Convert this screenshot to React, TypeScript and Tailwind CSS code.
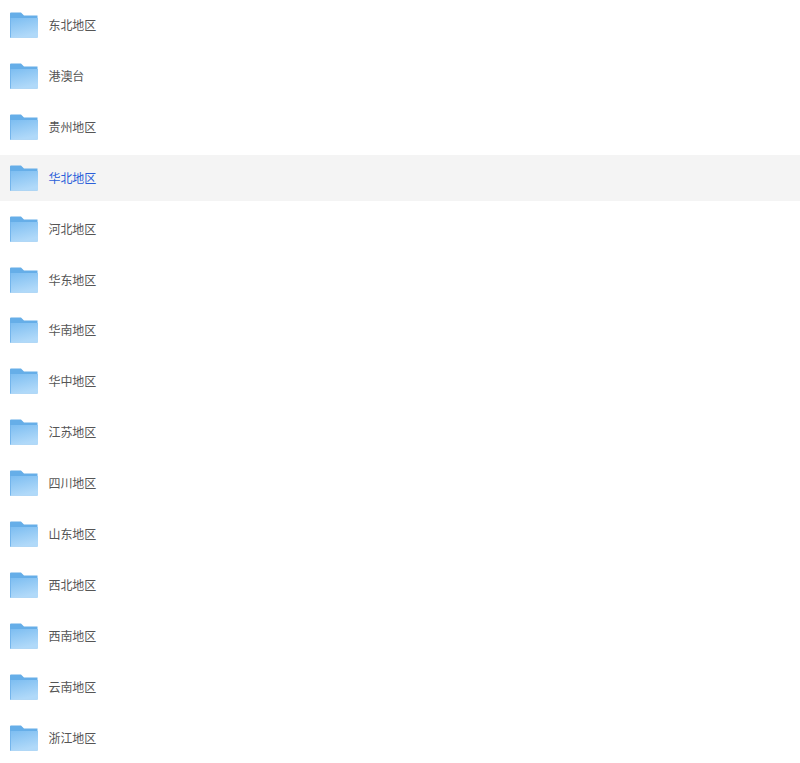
import React from "react";

const folders = [
  "东北地区",
  "港澳台",
  "贵州地区",
  "华北地区",
  "河北地区",
  "华东地区",
  "华南地区",
  "华中地区",
  "江苏地区",
  "四川地区",
  "山东地区",
  "西北地区",
  "西南地区",
  "云南地区",
  "浙江地区",
];

const FolderIcon = ({ id }: { id: number }) => (
  <svg width="30" height="26" viewBox="0 0 30 26" className="shrink-0">
    <defs>
      <linearGradient id={`front-${id}`} x1="0" y1="0" x2="0.35" y2="1">
        <stop offset="0" stopColor="#7cbdf1" />
        <stop offset="1" stopColor="#b0d9f9" />
      </linearGradient>
    </defs>
    <path d="M1 1.5 Q1 0.5 2 0.5 H12 L15 3.5 H28.5 V25.5 H1 Z" fill="#66aee8" />
    <path d="M1 6 H29 V25.5 H1 Z" fill={`url(#front-${id})`} />
    <rect x="1" y="6" width="1" height="19.5" fill="#74b5ec" />
  </svg>
);

export default function App() {
  return (
    <div className="flex flex-col gap-[5px] pt-[2px] bg-white font-['Liberation_Sans','Noto_Sans_CJK_SC',sans-serif]">
      {folders.map((name, index) => (
        <div
          key={name}
          className={`flex h-[45.93px] items-center gap-[10px] pl-[9px] text-[12px] ${index === 3 ? "bg-[#f4f4f4] text-[#2b5fd9]" : "text-[#555555]"}`}
        >
          <FolderIcon id={index} />
          <span className="mt-[2px] ml-[-0.5px] tracking-[-0.1px]">{name}</span>
        </div>
      ))}
    </div>
  );
}
